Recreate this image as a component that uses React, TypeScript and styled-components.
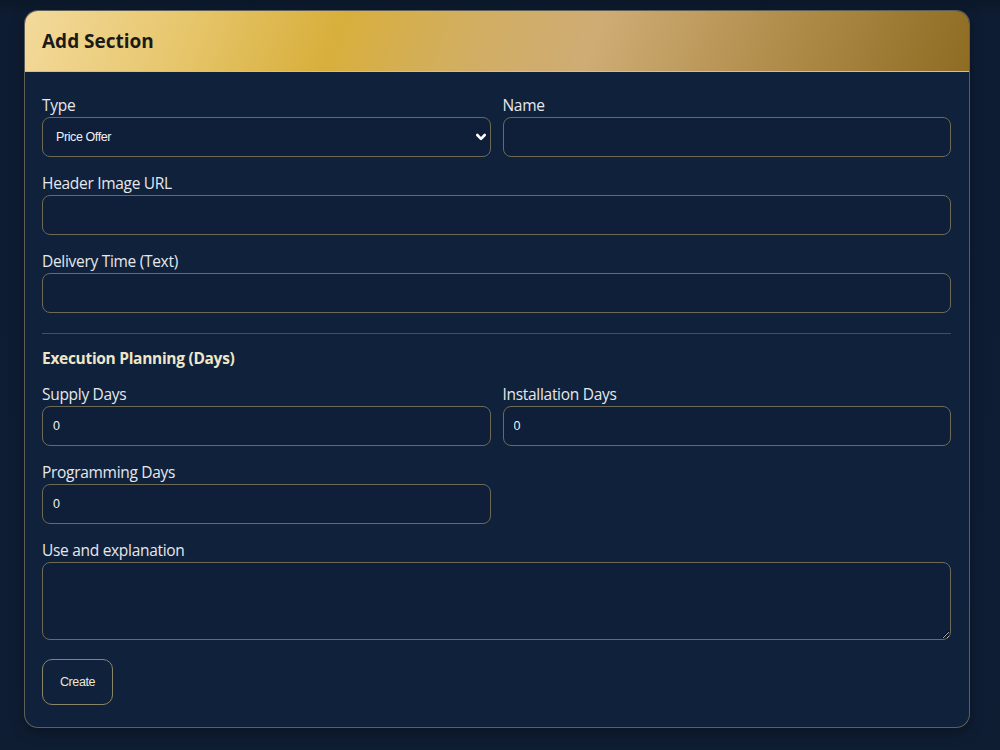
import styled, { createGlobalStyle } from "styled-components";

const GlobalStyle = createGlobalStyle`
  html, body { margin: 0; padding: 0; background: #0d1a2e; }
  body { font-family: "Open Sans", "Noto Sans", sans-serif; }
  * { box-sizing: border-box; }
`;

function App() {
    return (
        <>
            <GlobalStyle />
            <Page>
                <Card>
                    <CardHeader>
                        <Title>Add Section</Title>
                    </CardHeader>
                    <Body>
                        <TwoCols>
                            <Field>
                                <Label>Type</Label>
                                <SelectWrap>
                                    <Select defaultValue="offer">
                                        <option value="offer">Price Offer</option>
                                    </Select>
                                    <Chevron viewBox="0 0 12 12">
                                        <path d="M2.3 4 6 7.8 9.7 4" />
                                    </Chevron>
                                </SelectWrap>
                            </Field>
                            <Field>
                                <Label>Name</Label>
                                <Input />
                            </Field>
                        </TwoCols>
                        <Field>
                            <Label>Header Image URL</Label>
                            <Input />
                        </Field>
                        <Field>
                            <Label>Delivery Time (Text)</Label>
                            <Input />
                        </Field>

                        <Divider />

                        <SubHeading>Execution Planning (Days)</SubHeading>
                        <TwoCols>
                            <Field>
                                <Label>Supply Days</Label>
                                <Input defaultValue="0" />
                            </Field>
                            <Field>
                                <Label>Installation Days</Label>
                                <Input defaultValue="0" />
                            </Field>
                        </TwoCols>
                        <TwoCols>
                            <Field>
                                <Label>Programming Days</Label>
                                <Input defaultValue="0" />
                            </Field>
                        </TwoCols>
                        <Field>
                            <Label>Use and explanation</Label>
                            <TextArea />
                        </Field>
                        <ButtonRow>
                            <CreateButton>Create</CreateButton>
                        </ButtonRow>
                    </Body>
                </Card>
            </Page>
        </>
    );
}

export default App;

const Page = styled.div`
  width: 1000px;
  height: 750px;
  padding: 10px 30px 0 24px;
  background: linear-gradient(180deg, #0b1829 0%, #0e1c33 2%, #0f1d33 100%);
`;
const Card = styled.div`
  width: 946px;
  border: 1px solid rgba(190, 170, 120, 0.45);
  border-radius: 14px;
  background: #10213c;
  overflow: hidden;
  box-shadow: 0 4px 14px rgba(0, 0, 0, 0.35);
`;
const CardHeader = styled.div`
  height: 61px;
  display: flex;
  align-items: center;
  padding: 0 17px;
  background: linear-gradient(110deg, #f3da9c 0%, #e6c56a 18%, #d8af3c 33%, #d2ae62 47%, #ceac74 60%, #b08c4a 80%, #8e6c22 100%);
  border-bottom: 1px solid #e2c06a;
`;
const Title = styled.h2`
  margin: 0;
  font-size: 19px;
  font-weight: 700;
  color: #1b1a17;
`;
const Body = styled.div`
  padding: 23px 18px 22px 17px;
  display: flex;
  flex-direction: column;
  gap: 16px;
`;
const TwoCols = styled.div`
  display: grid;
  grid-template-columns: 1fr 1fr;
  gap: 12px;
`;
const Field = styled.div`
  display: flex;
  flex-direction: column;
  gap: 2px;
`;
const Label = styled.label`
  font-size: 15.5px;
  line-height: 20px;
  letter-spacing: -0.3px;
  color: #e6e8eb;
`;
const controlBase = `
  width: 100%;
  border: 1.5px solid #6e6a55;
  border-radius: 8px;
  background: #0f1f39;
  color: #f1f1f1;
  font-family: "Liberation Sans", Arial, sans-serif;
  font-size: 12.5px;
  letter-spacing: -0.4px;
  outline: none;
`;
const Input = styled.input`
  ${controlBase}
  height: 40px;
  padding: 0 10px;
`;
const SelectWrap = styled.div`
  position: relative;
`;
const Select = styled.select`
  ${controlBase}
  height: 40px;
  padding: 0 13px;
  appearance: none;
`;
const Chevron = styled.svg`
  position: absolute;
  right: 4px;
  top: 14px;
  width: 12px;
  height: 12px;
  fill: none;
  stroke: #ffffff;
  stroke-width: 2.6;
  stroke-linecap: round;
  stroke-linejoin: round;
  pointer-events: none;
`;
const TextArea = styled.textarea`
  ${controlBase}
  height: 78px;
  padding: 8px 10px;
  resize: vertical;
`;
const Divider = styled.hr`
  margin: 4px 0 -2px;
  border: none;
  border-top: 1px solid rgba(150, 150, 140, 0.4);
`;
const SubHeading = styled.h3`
  margin: 0;
  font-size: 15.5px;
  line-height: 20px;
  font-weight: 700;
  letter-spacing: -0.3px;
  color: #efe6c8;
`;
const ButtonRow = styled.div`
  display: flex;
  margin-top: 3px;
`;
const CreateButton = styled.button`
  width: 71px;
  height: 46px;
  border: 1.5px solid #8a8468;
  border-radius: 10px;
  background: transparent;
  color: #ece6d2;
  font-family: "Liberation Sans", Arial, sans-serif;
  font-size: 12.5px;
  letter-spacing: -0.4px;
  cursor: pointer;
`;
